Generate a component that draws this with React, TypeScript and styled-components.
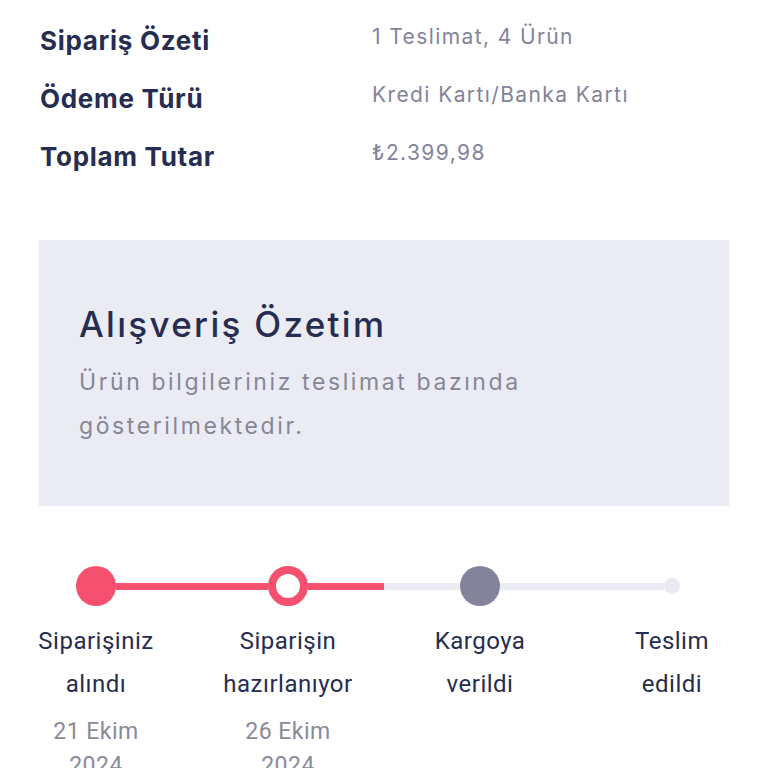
import React from "react";
import styled, { createGlobalStyle } from "styled-components";

const Global = createGlobalStyle`
  html, body { margin: 0; padding: 0; background: #ffffff; }
  body { font-family: Inter, "Noto Sans", sans-serif; -webkit-font-smoothing: antialiased; }
  * { box-sizing: border-box; }
`;

const Page = styled.div`
  width: 768px;
  height: 768px;
  overflow: hidden;
`;

const Inner = styled.div`
  padding: 20px 39px 0 39px;
`;

const Summary = styled.dl`
  margin: 0;
  display: grid;
  grid-template-columns: 333px 1fr;
  row-gap: 16px;
`;

const Label = styled.dt`
  margin: 0;
  font-family: Inter, sans-serif;
  font-weight: 700;
  font-size: 26px;
  letter-spacing: 0.7px;
  line-height: 42px;
  color: #262d50;
  padding-left: 1px;
`;

const Value = styled.dd`
  margin: 0;
  font-family: Inter, sans-serif;
  font-size: 21px;
  letter-spacing: 1.4px;
  line-height: 34px;
  color: #83839a;
`;

const InfoBox = styled.section`
  margin-top: 62px;
  background: #ebebf3;
  height: 266px;
  padding: 62px 40px 0 40px;
`;

const BoxTitle = styled.h2`
  margin: 0;
  font-family: Inter, sans-serif;
  font-weight: 500;
  font-size: 35px;
  letter-spacing: 2.3px;
  line-height: 44px;
  color: #262d50;
`;

const BoxText = styled.p`
  margin: 14px 0 0 0;
  font-family: Inter, sans-serif;
  font-size: 23px;
  letter-spacing: 2.6px;
  line-height: 44px;
  color: #868698;
  max-width: 500px;
`;

const Tracker = styled.ol`
  list-style: none;
  margin: 60px 0 0 0;
  padding: 0;
  display: grid;
  grid-template-columns: repeat(4, 1fr);
`;

const Step = styled.li`
  display: flex;
  flex-direction: column;
  align-items: stretch;
`;

const Track = styled.div`
  display: flex;
  align-items: center;
  height: 40px;
`;

const Half = styled.div<{ $color: string }>`
  flex: 1;
  height: 7px;
  background: ${(p) => p.$color};
`;

const Dot = styled.div<{ $kind: "done" | "current" | "next" | "end" }>`
  flex: none;
  border-radius: 50%;
  width: ${(p) => (p.$kind === "end" ? "16px" : "40px")};
  height: ${(p) => (p.$kind === "end" ? "16px" : "40px")};
  background: ${(p) =>
    p.$kind === "done"
      ? "#f5506e"
      : p.$kind === "current"
      ? "#ffffff"
      : p.$kind === "next"
      ? "#83839b"
      : "#ebebf3"};
  border: ${(p) => (p.$kind === "current" ? "8px solid #f5506e" : "none")};
`;

const StepLabel = styled.div`
  margin-top: 14px;
  text-align: center;
  font-family: Roboto, sans-serif;
  font-size: 24px;
  letter-spacing: 0.5px;
  line-height: 43px;
  color: #262d50;
`;

const StepDate = styled.div`
  margin-top: 9px;
  text-align: center;
  font-family: Roboto, sans-serif;
  font-size: 23px;
  letter-spacing: 0.5px;
  line-height: 34px;
  color: #8a8a98;
`;

const PINK = "#f5506e";
const LIGHT = "#ebebf3";

type StepData = {
  lines: string[];
  date?: string[];
  kind: "done" | "current" | "next" | "end";
  left: string;
  right: string;
};

const steps: StepData[] = [
  { lines: ["Siparişiniz", "alındı"], date: ["21 Ekim", "2024"], kind: "done", left: "transparent", right: PINK },
  { lines: ["Siparişin", "hazırlanıyor"], date: ["26 Ekim", "2024"], kind: "current", left: PINK, right: PINK },
  { lines: ["Kargoya", "verildi"], kind: "next", left: LIGHT, right: LIGHT },
  { lines: ["Teslim", "edildi"], kind: "end", left: LIGHT, right: "transparent" },
];

const rows = [
  ["Sipariş Özeti", "1 Teslimat, 4 Ürün"],
  ["Ödeme Türü", "Kredi Kartı/Banka Kartı"],
  ["Toplam Tutar", "₺2.399,98"],
];

export default function App() {
  return (
    <Page>
      <Global />
      <Inner>
        <Summary>
          {rows.map(([l, v]) => (
            <React.Fragment key={l}>
              <Label>{l}</Label>
              <Value>{v}</Value>
            </React.Fragment>
          ))}
        </Summary>
        <InfoBox>
          <BoxTitle>Alışveriş Özetim</BoxTitle>
          <BoxText>Ürün bilgileriniz teslimat bazında gösterilmektedir.</BoxText>
        </InfoBox>
      </Inner>
      <Tracker>
        {steps.map((s) => (
          <Step key={s.lines[0]}>
            <Track>
              <Half $color={s.left} />
              <Dot $kind={s.kind} />
              <Half $color={s.right} />
            </Track>
            <StepLabel>
              {s.lines.map((ln) => (
                <div key={ln}>{ln}</div>
              ))}
            </StepLabel>
            {s.date && (
              <StepDate>
                {s.date.map((d) => (
                  <div key={d}>{d}</div>
                ))}
              </StepDate>
            )}
          </Step>
        ))}
      </Tracker>
    </Page>
  );
}
